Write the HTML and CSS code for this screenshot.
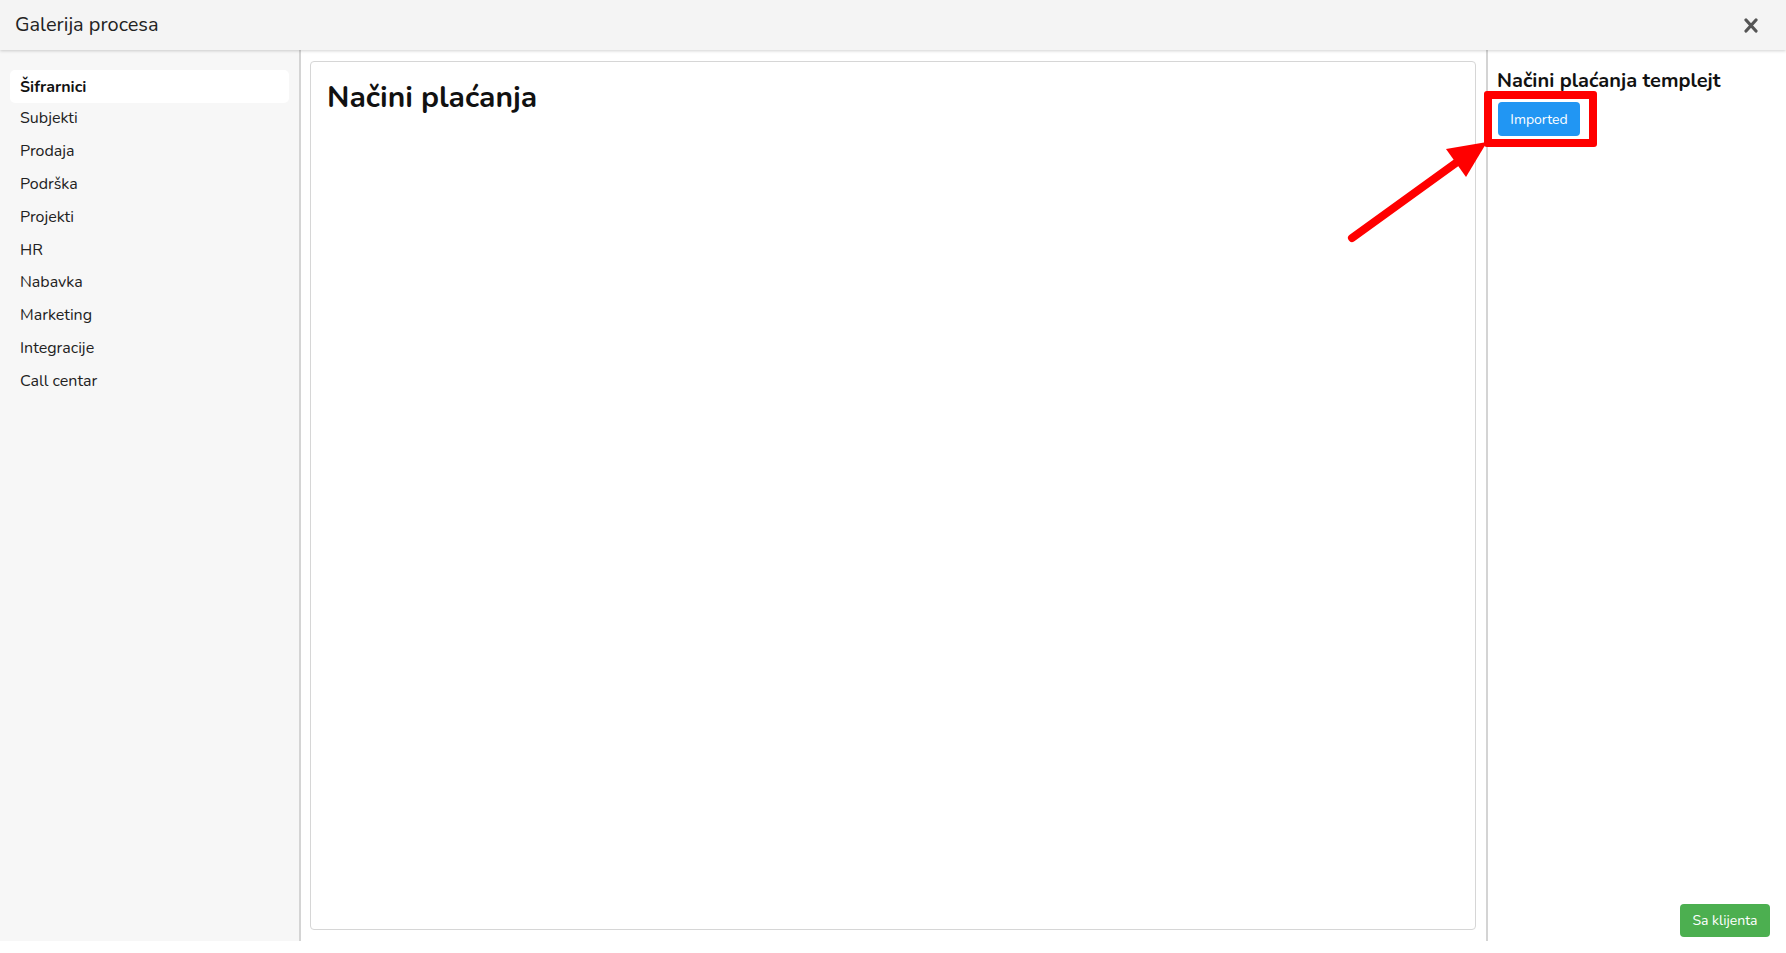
FILE: index.html
```html
<!DOCTYPE html>
<html lang="sr">
<head>
<meta charset="utf-8">
<title>Galerija procesa</title>
<link rel="stylesheet" href="styles.css">
</head>
<body>
<div class="modal">
  <header class="modal-header">
    <h1 class="modal-title">Galerija procesa</h1>
    <button class="close-btn" aria-label="Close">
      <svg width="14" height="15" viewBox="0 0 14 15"><path d="M2 2 L12 13 M12 2 L2 13" stroke="#555" stroke-width="3.2" stroke-linecap="round"/></svg>
    </button>
  </header>
  <div class="modal-body">
    <nav class="sidebar">
      <a class="nav-item active">Šifrarnici</a>
      <a class="nav-item">Subjekti</a>
      <a class="nav-item">Prodaja</a>
      <a class="nav-item">Podrška</a>
      <a class="nav-item">Projekti</a>
      <a class="nav-item">HR</a>
      <a class="nav-item">Nabavka</a>
      <a class="nav-item">Marketing</a>
      <a class="nav-item">Integracije</a>
      <a class="nav-item">Call centar</a>
    </nav>
    <main class="content">
      <section class="card">
        <h2 class="card-title">Načini plaćanja</h2>
      </section>
    </main>
    <aside class="details">
      <h3 class="details-title">Načini plaćanja templejt</h3>
      <button class="btn btn-blue">Imported</button>
      <div class="highlight-box"></div>
      <button class="btn btn-green">Sa klijenta</button>
    </aside>
    <svg class="arrow" width="1786" height="900" viewBox="0 50 1786 900">
      <line x1="1352" y1="238" x2="1460" y2="160" stroke="#ff0000" stroke-width="8" stroke-linecap="round"/>
      <polygon points="1487,142 1446,149 1466,177" fill="#ff0000"/>
    </svg>
  </div>
</div>
</body>
</html>
```
FILE: styles.css
```css
* { box-sizing: border-box; }
html, body { margin: 0; padding: 0; background: #fff; }
body {
  font-family: "Nunito", "Lato", "Open Sans", sans-serif;
  color: #212121;
  width: 1786px;
  height: 953px;
  overflow: hidden;
}
.modal {
  display: flex;
  flex-direction: column;
  height: 941px;
}
.modal-header {
  height: 50px;
  flex: 0 0 50px;
  background: #f4f4f4;
  display: flex;
  align-items: center;
  justify-content: space-between;
  padding: 0 28px 0 15px;
  box-shadow: 0 1px 3px rgba(0,0,0,0.18);
  position: relative;
  z-index: 2;
}
.modal-title {
  margin: 0;
  font-size: 20px;
  font-weight: 400;
  color: #222;
  padding-bottom: 1px;
}
.close-btn {
  border: 0;
  background: transparent;
  padding: 0;
  display: flex;
  margin-top: 1px;
}
.modal-body {
  flex: 1;
  display: flex;
  position: relative;
  min-height: 0;
}
.sidebar {
  width: 301px;
  flex: 0 0 301px;
  background: #f7f7f7;
  border-right: 2px solid #d4d4d4;
  padding: 20px 10px 0 10px;
  display: flex;
  flex-direction: column;
}
.nav-item {
  height: 33px;
  display: flex;
  align-items: center;
  padding-left: 10px;
  padding-bottom: 2px;
  font-size: 16px;
  color: #222;
  border-radius: 5px;
}
.nav-item + .nav-item {
  margin-top: -0.2px;
}
.nav-item.active {
  background: #fff;
  font-weight: 700;
  color: #111;
  padding-bottom: 0;
}
.content {
  flex: 1;
  padding: 11px 10px 11px 9px;
  display: flex;
  background: #fff;
}
.card {
  flex: 1;
  border: 1px solid #d6d6d6;
  border-radius: 4px;
  padding: 17px 16px;
}
.card-title {
  margin: 0;
  font-size: 30px;
  font-weight: 700;
  color: #111;
  line-height: 38px;
}
.details {
  width: 300px;
  flex: 0 0 300px;
  border-left: 2px solid #d4d4d4;
  padding: 18px 10px 0 9px;
  position: relative;
  display: flex;
  flex-direction: column;
  align-items: flex-start;
}
.details-title {
  margin: 0 0 8px 0;
  font-size: 20px;
  font-weight: 700;
  color: #111;
  line-height: 26px;
}
.btn {
  border: 0;
  color: #fff;
  font-family: inherit;
  font-size: 14px;
  border-radius: 4px;
  height: 34px;
  padding: 0 12px;
}
.btn-blue {
  background: #2196f3;
  width: 82px;
  margin-left: 1px;
}
.btn-green {
  background: #4caf50;
  width: 90px;
  height: 33px;
  position: absolute;
  right: 16px;
  bottom: 4px;
}
.highlight-box {
  position: absolute;
  left: -4px;
  top: 41px;
  width: 113px;
  height: 56px;
  border: 8px solid #ff0000;
  border-radius: 3px;
}
.arrow {
  position: absolute;
  left: 0;
  top: 0;
  pointer-events: none;
}
```
